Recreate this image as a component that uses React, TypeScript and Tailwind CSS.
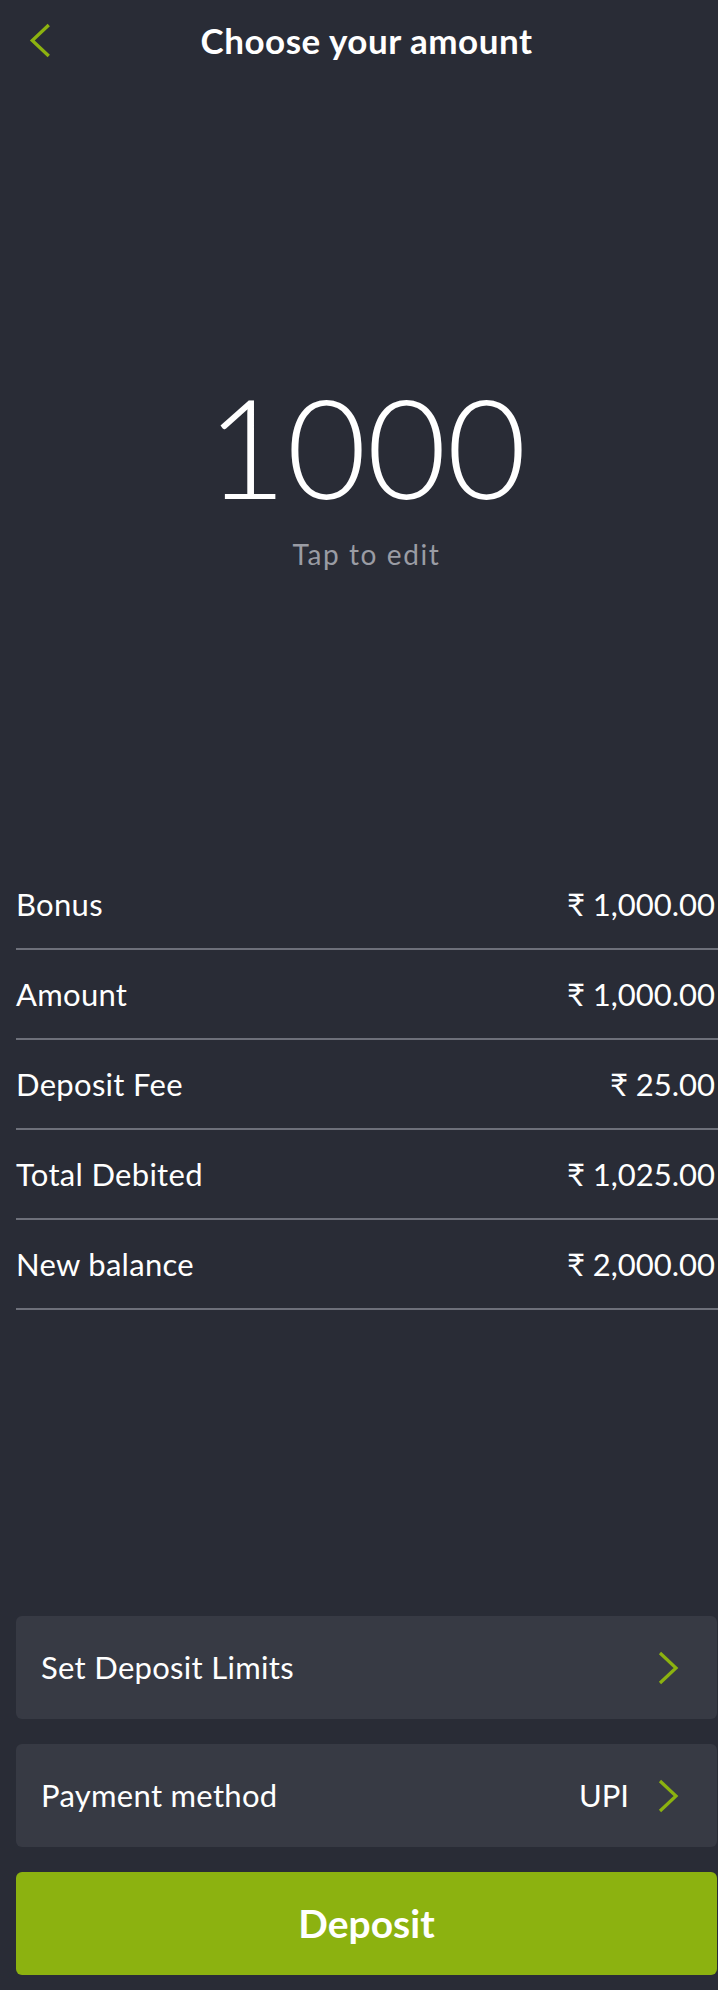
import React from "react";

const rows = [
    { label: "Bonus", value: "₹ 1,000.00" },
    { label: "Amount", value: "₹ 1,000.00" },
    { label: "Deposit Fee", value: "₹ 25.00" },
    { label: "Total Debited", value: "₹ 1,025.00" },
    { label: "New balance", value: "₹ 2,000.00" },
];

const Chevron = ({ left = false, className = "" }: { left?: boolean; className?: string }) =>
{
    return (
        <svg viewBox="0 0 22 34" className={className} fill="none" stroke="#8cb210" strokeWidth="3.2" strokeLinecap="butt" strokeLinejoin="miter">
            {left ? <path d="M20 2 L4 17 L20 32" /> : <path d="M2 2 L18 17 L2 32" />}
        </svg>
    );
};

export default function App()
{
    return (
        <div className="h-[1990px] w-full bg-[#292c36] text-white flex flex-col font-['Lato',sans-serif]">
            <div className="relative h-[80px] flex items-center justify-center pl-[15px]">
                <Chevron left className="absolute left-[28px] top-[23px] w-[23px] h-[35px]" />
                <div className="text-[35px] font-bold leading-none tracking-[0.5px]">Choose your amount</div>
            </div>

            <div className="h-[780px] flex flex-col items-center pt-[297px] pl-[15px]">
                <div className="text-[138px] font-light leading-none">1000</div>
                <div className="mt-[25px] text-[28px] leading-none tracking-[1.6px] text-[#9a9ca4]">Tap to edit</div>
            </div>

            <div className="pl-[16px]">
                {rows.map((row) => (
                    <div key={row.label} className="h-[90px] flex items-center justify-between border-b-2 border-[#6d707a] text-[31px]">
                        <span className="tracking-[0.3px]">{row.label}</span>
                        <span className="pr-[3px]">{row.value}</span>
                    </div>
                ))}
            </div>

            <div className="flex-1" />

            <div className="pl-[16px] pr-px pb-[15px] flex flex-col gap-[25px]">
                <div className="h-[103px] rounded-md bg-[#373a44] flex items-center justify-between pl-[25px] pr-[37px]">
                    <span className="text-[31px] tracking-[0.3px]">Set Deposit Limits</span>
                    <Chevron className="w-[22px] h-[34px]" />
                </div>
                <div className="h-[103px] rounded-md bg-[#373a44] flex items-center justify-between pl-[25px] pr-[37px]">
                    <span className="text-[31px] tracking-[0.3px]">Payment method</span>
                    <div className="flex items-center gap-[29px]">
                        <span className="text-[31px]">UPI</span>
                        <Chevron className="w-[22px] h-[34px]" />
                    </div>
                </div>
                <div className="h-[103px] rounded-md bg-[#8cb210] flex items-center justify-center">
                    <span className="text-[39px] font-bold">Deposit</span>
                </div>
            </div>
        </div>
    );
}
